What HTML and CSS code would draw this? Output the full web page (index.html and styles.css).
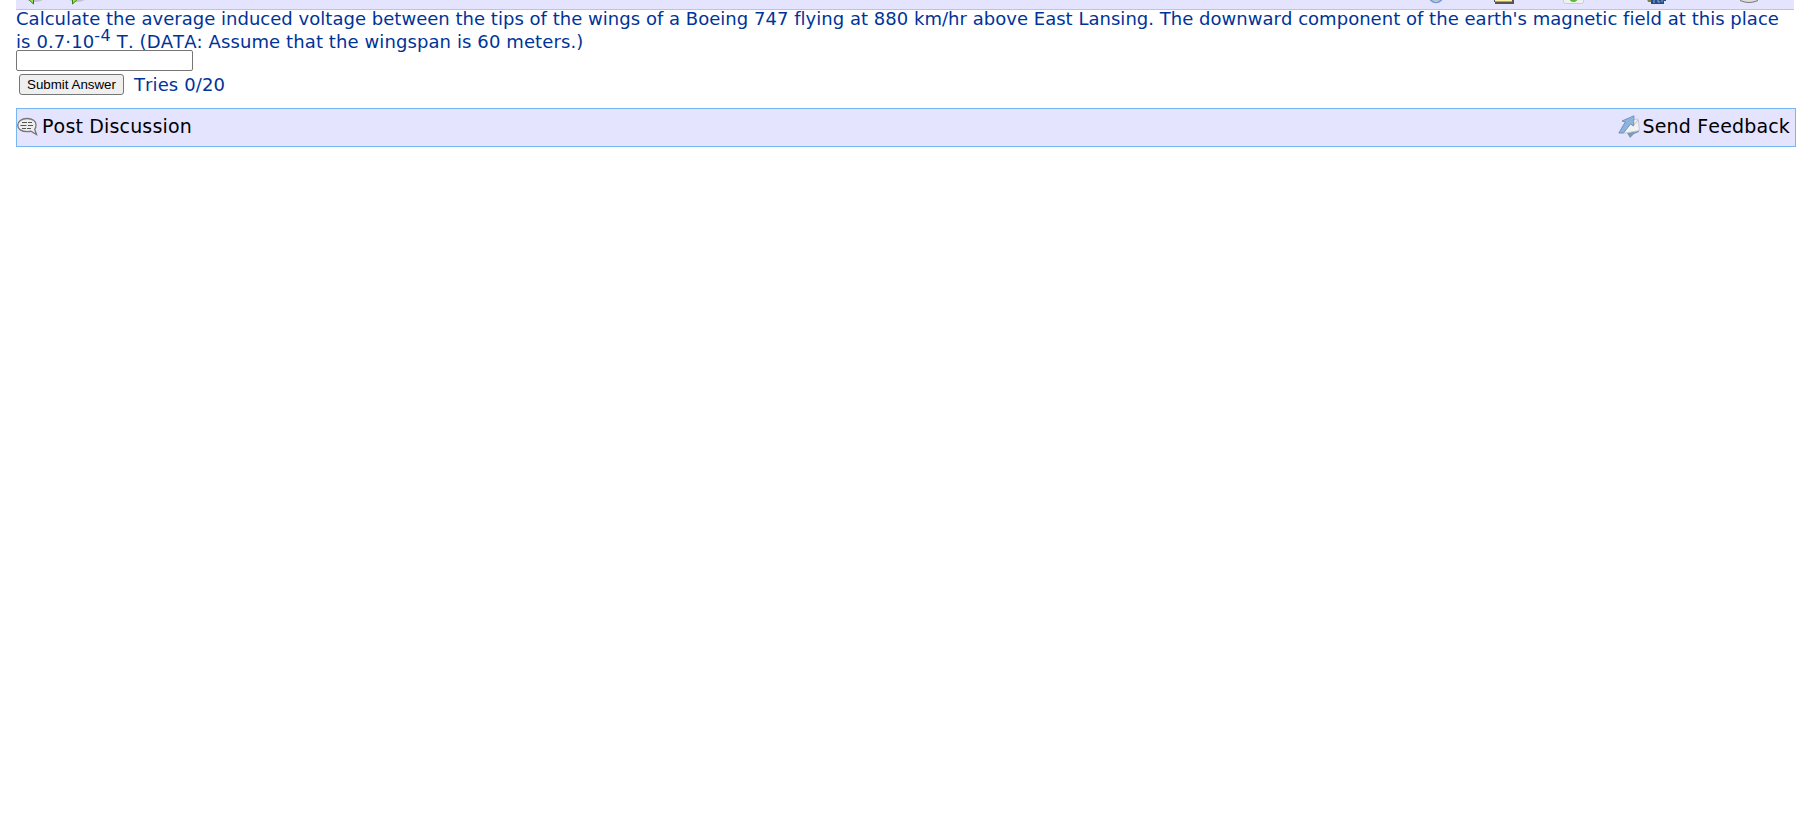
FILE: index.html
```html
<!DOCTYPE html>
<html lang="en">
<head>
    <meta charset="UTF-8">
    <title>Induced Voltage</title>
    <link rel="stylesheet" href="styles.css">
</head>
<body>
    <div class="toolbar">
        <div class="tools">
            <svg class="nav-prev" width="24" height="9" viewBox="0 0 24 9"><ellipse cx="15" cy="-1" rx="8" ry="3" fill="#aaaaba" opacity=".6"/><path d="M5-4 13.500 4V-4z" fill="#9be35d" stroke="#3b7d0c"/></svg>
            <svg class="nav-next" width="24" height="9" viewBox="0 0 24 9"><ellipse cx="11" cy="-1" rx="8" ry="3" fill="#aaaaba" opacity=".6"/><path d="M6.500-4V4L15-4z" fill="#9be35d" stroke="#3b7d0c"/></svg>
        </div>
        <div class="tools">
            <svg class="tool-info" width="20" height="9" viewBox="0 0 20 9"><circle cx="10" cy="-4.500" r="7" fill="#d5e4fa" stroke="#7199d6" stroke-width="1.500"/><path d="M6 0h8" stroke="#9aa3ad"/></svg>
            <svg class="tool-note" width="20" height="9" viewBox="0 0 20 9"><path d="M0-2h20v6H1V2H0z" fill="#555"/><path d="M1-2h17v3.500H1z" fill="#fff3a0"/></svg>
            <svg class="tool-check" width="22" height="9" viewBox="0 0 22 9"><rect x=".5" y="-8" width="20" height="11.500" rx="2" fill="#f0f0f0" stroke="#ccc"/><circle cx="10.500" cy="-2.500" r="4.500" fill="#58b83d"/></svg>
            <svg class="tool-print" width="20" height="9" viewBox="0 0 20 9"><path d="M0-1h5v3H1z" fill="#77834a"/><path d="M4-1h15v2h-2v3H4z" fill="#294d83"/><path d="M7 0v3M10 1h2v2M15 0v2" stroke="#83b2e6" fill="none"/></svg>
            <svg class="tool-disk" width="20" height="9" viewBox="0 0 20 9"><path d="M1-1h18v2q-9 4-18 0z" fill="#777"/><path d="M1-2h18v2q-9 4-18 0z" fill="#ddd"/></svg>
        </div>
    </div>

    <form class="problem">
        <p>Calculate the average induced voltage between the tips of the wings of a Boeing 747 flying at 880 km/hr above East Lansing. The downward component of the earth's magnetic field at this place<br><span class="last-line">is 0.7·10<sup>-4</sup> T. (DATA: Assume that the wingspan is 60 meters.)</span></p>
        <input class="answer" type="text">
        <div class="submit-row">
            <button class="btn" type="button">Submit Answer</button>
            <span class="tries">Tries 0/20</span>
        </div>
    </form>

    <div class="feedback-bar">
        <a class="post">
            <svg width="22" height="20" viewBox="0 0 22 20">
                <path d="M10 1.500c5.500 0 9 2.600 9 6.200 0 2-.5 3.600-1.300 4.600l1.800 5.200-5.600-3.300q-1.600.5-3.600.5C4.500 14.700.7 12 .7 8.200S4.500 1.500 10 1.500z" fill="#eee" stroke="#777" stroke-width="1.300"/>
                <path d="M5 5.500h5M11 5.500h4M3.500 8.500h6M11 8.500h5M5 11.500h4M10 11.500h4" stroke="#555" stroke-width="1.200"/>
            </svg>
            <span>Post Discussion</span>
        </a>
        <a class="send">
            <svg width="23" height="23" viewBox="0 0 23 23">
                <path d="M21 11v6l-5 2-4 4-3-5z" fill="#7898bd"/>
                <path d="M8 5.500l12-1.500 1.500 11.500L8 18H3l1-6z" fill="#f2f2f2" stroke="#c3c7cd"/>
                <path d="M12 6l4 4 4-5" fill="none" stroke="#b9bec7"/>
                <path d="M16 .8 15.500 11l-3-2-7 9H.8L7.500 7 4 6z" fill="#8fb4dc" stroke="#6e96c3"/>
            </svg>
            <span>Send Feedback</span>
        </a>
    </div>
</body>
</html>
```
FILE: styles.css
```css
body {
    margin: 0 10px 0 16px;
    background: #fff;
    color: #039;
    font-family: Verdana, "DejaVu Sans", sans-serif;
    font-size: 18px;
    line-height: 23px;
    font-kerning: none;
    font-variant-ligatures: none;
}

.toolbar {
    display: flex;
    justify-content: space-between;
    height: 9px;
    margin-right: 2px;
    background: #e4e4ff;
    border-bottom: 1px solid #c4c4c8;
    overflow: hidden;
}

.tools {
    display: flex;
}

.toolbar svg,
.feedback-bar svg {
    display: block;
    flex: none;
}

.nav-prev {
    margin-left: 4px;
}

.nav-next {
    margin-left: 22px;
}

.tool-note {
    margin-left: 48px;
}

.tool-check {
    margin-left: 49px;
}

.tool-print {
    margin-left: 62px;
}

.tool-disk {
    margin-left: 72px;
    margin-right: 35px;
}

.problem {
    margin: 0;
}

.problem p {
    margin: -3px 0 0;
    white-space: nowrap;
    letter-spacing: 0.025px;
}

.problem .last-line {
    letter-spacing: 0.1px;
}

sup {
    font-size: 16px;
    line-height: 0;
    letter-spacing: 0.4px;
    vertical-align: 7px;
}

.answer {
    display: block;
    box-sizing: border-box;
    width: 177px;
    height: 21px;
    margin: 0;
    margin-top: -3px;
    background: #fff;
    border: 1px solid #767676;
    border-radius: 2px;
}

.submit-row {
    display: flex;
    align-items: center;
    margin: 3px 0 0 3px;
    height: 21px;
}

.btn {
    width: 105px;
    height: 21px;
    padding: 0;
    background: #efefef;
    border: 1px solid #767676;
    border-radius: 3px;
    color: #000;
    font: 13.333px "Liberation Sans", Arial, sans-serif;
}

.tries {
    margin-left: 10px;
    letter-spacing: 0.1px;
}

.feedback-bar {
    display: flex;
    justify-content: space-between;
    box-sizing: border-box;
    height: 39px;
    margin-top: 13px;
    padding: 6px 5px 0 0;
    background: #e4e4ff;
    border: 1px solid #77b5f5;
    color: #000;
    font-size: 19px;
    letter-spacing: 0.16px;
}

.feedback-bar a {
    display: flex;
}

.post svg {
    margin: 2px 3px 0 0;
}

.send svg {
    margin-right: 2px;
}
```
